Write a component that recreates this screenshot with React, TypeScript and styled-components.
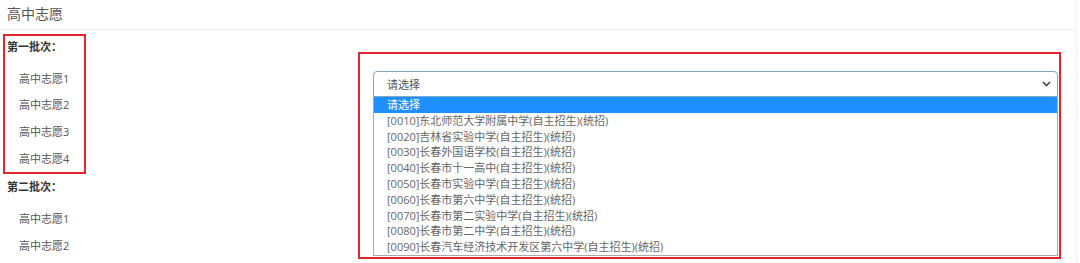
import React from "react";
import styled, { createGlobalStyle } from "styled-components";

// Global reset - plain white page, CJK-friendly font stack
const GlobalStyle = createGlobalStyle`
  html, body {
    margin: 0;
    padding: 0;
    background: #fff;
  }
  body {
    font-family: "Open Sans", "Noto Sans CJK SC", sans-serif;
    color: #555;
  }
`;

const batches = [
  { title: "第一批次：", items: ["高中志愿1", "高中志愿2", "高中志愿3", "高中志愿4"], marked: true },
  { title: "第二批次：", items: ["高中志愿1", "高中志愿2"], marked: false },
];

const schools = [
  "[0010]东北师范大学附属中学(自主招生)(统招)",
  "[0020]吉林省实验中学(自主招生)(统招)",
  "[0030]长春外国语学校(自主招生)(统招)",
  "[0040]长春市十一高中(自主招生)(统招)",
  "[0050]长春市实验中学(自主招生)(统招)",
  "[0060]长春市第六中学(自主招生)(统招)",
  "[0070]长春市第二实验中学(自主招生)(统招)",
  "[0080]长春市第二中学(自主招生)(统招)",
  "[0090]长春汽车经济技术开发区第六中学(自主招生)(统招)",
];

const App = () => {
  return (
    <>
      <GlobalStyle />
      <Panel>
        <Header>高中志愿</Header>
        <Body>
          <LeftColumn>
            {batches.map((b, i) => (
              <Batch key={i} $marked={b.marked}>
                <BatchTitle>{b.title}</BatchTitle>
                <ItemList>
                  {b.items.map((it, j) => (
                    <Item key={j}>{it}</Item>
                  ))}
                </ItemList>
              </Batch>
            ))}
          </LeftColumn>
          <RightColumn>
            {/* annotation frame around the opened select */}
            <Highlight>
              <SelectBox>
                <span>请选择</span>
                <svg width="9" height="6" viewBox="0 0 9 6" fill="none">
                  <path d="M1 1l3.5 3.5L8 1" stroke="#444" strokeWidth="1.6" />
                </svg>
              </SelectBox>
              <OptionList>
                <Option $active>请选择</Option>
                {schools.map((s) => (
                  <Option key={s}>{s}</Option>
                ))}
              </OptionList>
            </Highlight>
          </RightColumn>
        </Body>
      </Panel>
    </>
  );
};

const Panel = styled.div`
  width: 1076px;
  height: 263px;
  overflow: hidden;
  border-right: 1px solid #f0f0f0;
`;

const Header = styled.div`
  height: 30px;
  line-height: 28px;
  padding-left: 7px;
  font-size: 14px;
  color: #555;
  border-bottom: 1px solid #f0f0f0;
  box-sizing: border-box;
`;

const Body = styled.div`
  display: flex;
`;

const LeftColumn = styled.div`
  width: 355px;
  padding: 4px 0 0 3px;
`;

const Batch = styled.div<{ $marked: boolean }>`
  width: 79px;
  border: 2px solid ${(p) => (p.$marked ? "#e0262f" : "transparent")};
`;

const BatchTitle = styled.div`
  padding: 4px 0 0 2px;
  line-height: 14px;
  font-size: 11px;
  font-weight: bold;
  color: #333;
  white-space: nowrap;
`;

const ItemList = styled.div`
  margin-top: 11.7px;
`;

const Item = styled.div`
  height: 26.67px;
  line-height: 26.67px;
  padding-left: 14px;
  font-size: 11px;
  color: #555;
  white-space: nowrap;
`;

const RightColumn = styled.div`
  padding-top: 22px;
`;

const Highlight = styled.div`
  width: 685px;
  border: 2px solid #e0262f;
  padding: 17px 1px 1px 13px;
`;

const SelectBox = styled.div`
  height: 26px;
  box-sizing: border-box;
  border: 1px solid #7ea9c6;
  border-radius: 4px 4px 0 0;
  display: flex;
  align-items: center;
  justify-content: space-between;
  padding: 0 6px 0 13px;
  font-size: 11px;
  color: #555;
`;

const OptionList = styled.div`
  border: 1px solid #a9a9a9;
  border-top: none;
`;

const Option = styled.div<{ $active?: boolean }>`
  height: 15.8px;
  line-height: 15.8px;
  padding-left: 13px;
  font-size: 11px;
  white-space: nowrap;
  color: ${(p) => (p.$active ? "#fff" : "#666")};
  background: ${(p) => (p.$active ? "#1e90ff" : "transparent")};
`;

export default App;
